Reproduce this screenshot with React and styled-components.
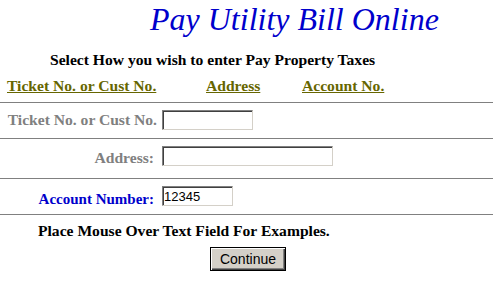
import React from 'react';
import styled, { createGlobalStyle } from 'styled-components';

const GlobalStyle = createGlobalStyle`
  body {
    margin: 0;
    background: #ffffff;
    font-family: "Liberation Serif", "Times New Roman", serif;
  }
`

const Page = styled.div`
  width: 493px;
`

const Title = styled.h1`
  margin: 0;
  padding: 1px 0 0 150px;
  font-size: 32px;
  font-style: italic;
  font-weight: normal;
  line-height: 36px;
  color: #0000cc;
`

const Heading = styled.p`
  margin: 13px 0 0;
  padding-left: 50px;
  font-size: 15.6px;
  font-weight: bold;
  line-height: 20px;
  color: #000;
`

const Tabs = styled.nav`
  display: grid;
  grid-template-columns: 199px 96px auto;
  margin-top: 6px;
  padding-left: 7px;
  line-height: 20px;
`

const TabLink = styled.a`
  justify-self: start;
  font-size: 15.6px;
  font-weight: bold;
  color: #666600;
  text-decoration: underline;
`

const Rule = styled.hr`
  margin: ${p => p.$top || 0}px 0 0;
  height: 0;
  border: 0;
  border-top: 1px solid #808080;
`

const FieldRow = styled.div`
  display: grid;
  grid-template-columns: 157px auto;
  column-gap: 5px;
  align-items: start;
  padding: 7px 0 ${p => p.$bottom}px;
`

const FieldLabel = styled.label`
  box-sizing: border-box;
  height: 20px;
  text-align: right;
  padding-top: ${p => p.$shift || 0}px;
  padding-right: ${p => p.$pad || 0}px;
  font-size: ${p => p.$size || 15.6}px;
  font-weight: bold;
  line-height: 20px;
  white-space: nowrap;
  color: ${p => (p.$active ? '#0000cc' : '#808080')};
`

const TextInput = styled.input`
  box-sizing: border-box;
  width: ${p => p.$w}px;
  height: 20px;
  margin: 0;
  padding: 0 1px;
  border: 1px solid;
  border-color: #808080 #d4d0c8 #d4d0c8 #808080;
  box-shadow: inset 1px 1px 0 #404040, inset -1px -1px 0 #ffffff;
  background: #ffffff;
  font-family: "Liberation Sans", Arial, sans-serif;
  font-size: 13px;
  color: #000;
  outline: none;
`

const Note = styled.p`
  margin: 6px 0 0;
  padding-left: 38px;
  font-size: 15.6px;
  font-weight: bold;
  line-height: 20px;
  color: #000;
`

const ButtonRow = styled.div`
  display: flex;
  justify-content: center;
  padding-left: 3px;
  margin-top: 6px;
`

const Button = styled.button`
  box-sizing: border-box;
  width: 76px;
  height: 24px;
  padding: 0;
  border: 1px solid #000000;
  background: #d4d0c8;
  box-shadow: inset 1px 1px 0 #ffffff, inset -1px -1px 0 #404040, inset -2px -2px 0 #808080;
  font-family: "Liberation Sans", Arial, sans-serif;
  font-size: 14px;
  color: #000;
`

const fields = [
  { label: 'Ticket No. or Cust No.', width: 91, bottom: 8, shift: 0, pad: 0 },
  { label: 'Address:', width: 171, bottom: 12, shift: 2, pad: 3 },
  { label: 'Account Number:', width: 71, bottom: 8, shift: 3, pad: 3, size: 15, active: true, value: '12345' },
]

export default function App() {
  return (
    <Page>
      <GlobalStyle />
      <Title>Pay Utility Bill Online</Title>
      <Heading>Select How you wish to enter Pay Property Taxes</Heading>
      <Tabs>
        <TabLink href="#">Ticket No. or Cust No.</TabLink>
        <TabLink href="#">Address</TabLink>
        <TabLink href="#">Account No.</TabLink>
      </Tabs>
      <Rule $top={6} />
      {fields.map((f, i) => (
        <React.Fragment key={i}>
          <FieldRow $bottom={f.bottom}>
            <FieldLabel $active={f.active} $shift={f.shift} $pad={f.pad} $size={f.size}>{f.label}</FieldLabel>
            <TextInput $w={f.width} defaultValue={f.value || ''} />
          </FieldRow>
          <Rule />
        </React.Fragment>
      ))}
      <Note>Place Mouse Over Text Field For Examples.</Note>
      <ButtonRow>
        <Button>Continue</Button>
      </ButtonRow>
    </Page>
  )
}
